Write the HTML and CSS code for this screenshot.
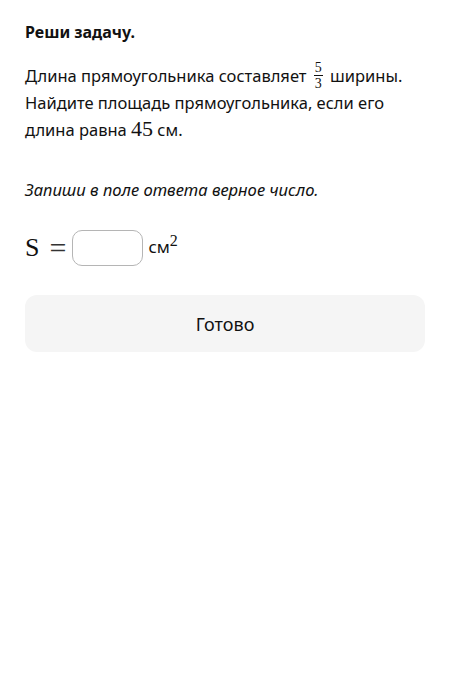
FILE: index.html
```html
<!DOCTYPE html>
<html>
<head>
    <meta charset="utf-8">
    <title>Реши задачу</title>
    <link rel="stylesheet" href="styles.css">
</head>
<body>
    <div class="task">
        <div class="task-title">Реши задачу.</div>
        <p class="task-text">
            Длина прямоугольника составляет
            <span class="frac"><span class="num">5</span><span class="den">3</span></span>
            ширины. Найдите площадь прямоугольника, если его длина равна <span class="math">45</span> см.
        </p>
        <p class="hint">Запиши в поле ответа верное число.</p>
        <div class="answer-row">
            <span class="math big">S</span>
            <span class="math big eq">=</span>
            <input class="answer-input" type="text">
            <span class="unit">см<sup class="math">2</sup></span>
        </div>
        <button class="done-btn">Готово</button>
    </div>
</body>
</html>
```

FILE: styles.css
```css
body {
    margin: 0;
    background: #fff;
    font-family: "Noto Sans", "Open Sans", sans-serif;
    color: #111;
}

.task {
    padding: 20px 25px;
}

.task-title {
    font-size: 16px;
    font-weight: bold;
    line-height: 24px;
}

.task-text {
    margin: 18px 0 0;
    font-size: 16.5px;
    line-height: 27px;
}

.math {
    font-family: "Liberation Serif", "DejaVu Serif", serif;
    font-size: 22px;
    line-height: 0;
}

.frac {
    display: inline-flex;
    flex-direction: column;
    align-items: center;
    vertical-align: middle;
    font-family: "Liberation Serif", serif;
    font-size: 14px;
    line-height: 13px;
    margin: -8px 3px;
    position: relative;
    top: -2px;
}

.frac .num {
    border-bottom: 1px solid #111;
    padding: 0 1px 1px;
}

.frac .den {
    padding-top: 1px;
}

.hint {
    margin: 35px 0 0;
    font-size: 16.6px;
    font-style: italic;
    line-height: 24px;
}

.answer-row {
    display: flex;
    align-items: center;
    margin-top: 28px;
}

.big {
    font-size: 26px;
    line-height: 36px;
}

.eq {
    font-size: 30px;
    margin: 0 6px 0 10px;
    color: #333;
}

.answer-input {
    width: 71px;
    height: 36px;
    box-sizing: border-box;
    border: 1px solid #b5b5b5;
    border-radius: 10px;
    margin: 0;
}

.unit {
    font-size: 17px;
    margin-left: 5px;
    position: relative;
    top: -2px;
}

.unit sup {
    font-size: 16px;
    line-height: 0;
}

.done-btn {
    display: block;
    width: 100%;
    height: 57px;
    margin-top: 29px;
    border: none;
    border-radius: 12px;
    background: #f5f5f5;
    font-family: "Noto Sans", "Open Sans", sans-serif;
    font-size: 18px;
    color: #111;
}
```
